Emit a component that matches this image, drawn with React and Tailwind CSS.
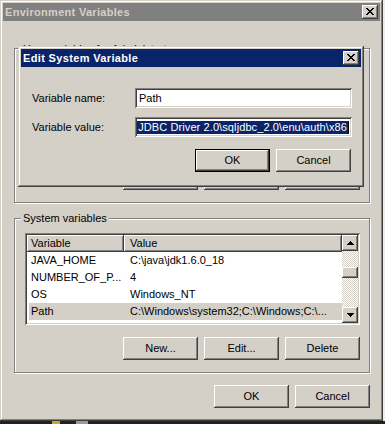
import React from 'react';

// classic 3D edges
const raised = 'shadow-[inset_-1px_-1px_#404040,inset_1px_1px_#ffffff,inset_-2px_-2px_#808080,inset_2px_2px_#d4d0c8]';
const sunken = 'shadow-[inset_1px_1px_#808080,inset_-1px_-1px_#ffffff,inset_2px_2px_#404040,inset_-2px_-2px_#d4d0c8]';
const frame = 'shadow-[inset_-1px_-1px_#404040,inset_1px_1px_#d4d0c8,inset_-2px_-2px_#808080,inset_2px_2px_#ffffff]';

function CloseButton() {
    return (
        <div className={`w-[16px] h-[14px] bg-[#d4d0c8] flex items-center justify-center ${raised}`}>
            <svg width="8" height="7" viewBox="0 0 8 7" shapeRendering="crispEdges" className="-mt-[1px] -ml-[1px]">
                <path fill="#000" d="M0 0h2v1H0z M6 0h2v1H6z M1 1h2v1H1z M5 1h2v1H5z M2 2h4v1H2z M3 3h2v1H3z M2 4h4v1H2z M1 5h2v1H1z M5 5h2v1H5z M0 6h2v1H0z M6 6h2v1H6z" />
            </svg>
        </div>
    );
}

function Button({ children, isDefault }) {
    if (isDefault) {
        return (
            <div className="w-[75px] h-[23px] border border-black">
                <div className={`w-full h-full bg-[#d4d0c8] flex items-center justify-center ${raised}`}>{children}</div>
            </div>
        );
    }
    return (
        <div className={`w-[75px] h-[23px] bg-[#d4d0c8] flex items-center justify-center ${raised}`}>{children}</div>
    );
}

function Arrow({ down }) {
    return (
        <div className={`w-[16px] h-[16px] bg-[#d4d0c8] flex items-center justify-center ${raised}`}>
            <svg width="7" height="4" viewBox="0 0 7 4" shapeRendering="crispEdges" className={down ? 'rotate-180' : ''}>
                <path fill="#000" d="M3 0h1v1H3z M2 1h3v1H2z M1 2h5v1H1z M0 3h7v1H0z" />
            </svg>
        </div>
    );
}

function ListView({ rows, selected, thumbTop, covered }) {
    return (
        <div className={`ml-[10px] mr-[9px] h-[92px] bg-white p-[2px] flex ${sunken}`}>
            <div className="flex-1 flex flex-col overflow-hidden">
                <div className="h-[17px] flex shrink-0">
                    <div className={`w-[97px] bg-[#d4d0c8] pl-[4px] flex items-center ${raised}`}>{covered ? null : 'Variable'}</div>
                    <div className={`flex-1 bg-[#d4d0c8] pl-[6px] flex items-center ${raised}`}>{covered ? null : 'Value'}</div>
                </div>
                {rows.map(([name, value]) => (
                    <div key={name} className={`h-[17px] shrink-0 ml-[2px] flex items-center whitespace-nowrap ${name === selected ? 'bg-[#d4d0c8]' : ''}`}>
                        <div className="w-[95px] pl-[2px] overflow-hidden">{name}</div>
                        <div className="flex-1 pl-[6px] overflow-hidden">{value}</div>
                    </div>
                ))}
            </div>
            <div className="w-[16px] flex flex-col">
                <Arrow />
                <div className="flex-1 bg-[repeating-conic-gradient(#d4d0c8_0_25%,#ffffff_0_50%)] bg-[length:2px_2px]">
                    <div className={`h-[11px] bg-[#d4d0c8] ${raised}`} style={{ marginTop: thumbTop }} />
                </div>
                <Arrow down />
            </div>
        </div>
    );
}

function GroupBox({ label, rows, selected, thumbTop, covered, className = '' }) {
    return (
        <div className={`mr-[10px] ml-[11px] h-[155px] flex flex-col border border-[#808080] shadow-[inset_1px_1px_#ffffff,1px_1px_#ffffff] ${className}`}>
            {covered ? (
                <span className="block -mt-[6px] ml-[6px] w-fit bg-[#d4d0c8] px-[2px] leading-[13px] mb-[7px]">{label}</span>
            ) : (
                <span className="block -mt-[7px] ml-[6px] w-fit bg-[#d4d0c8] px-[2px] leading-[13px] mb-[8px]">{label}</span>
            )}
            <ListView rows={rows} selected={selected} thumbTop={thumbTop} covered={covered} />
            <div className="mt-[12px] mr-[9px] flex justify-end gap-[6px]">
                <Button>{covered ? null : 'New...'}</Button>
                <Button>{covered ? null : 'Edit...'}</Button>
                <Button>{covered ? null : 'Delete'}</Button>
            </div>
        </div>
    );
}

function EditDialog() {
    return (
        <div className={`absolute left-[18px] top-[46px] w-[346px] h-[141px] bg-[#d4d0c8] p-[3px] flex flex-col ${frame}`}>
            <div className="h-[18px] bg-[#0a246a] flex items-center justify-between pl-[2px] pr-[2px]">
                <span className="font-bold text-white tracking-[0.35px]">Edit System Variable</span>
                <CloseButton />
            </div>
            <div className="pl-[11px] pr-[9px] pt-[21px] flex flex-col">
                <div className="flex items-center h-[20px]">
                    <span className="w-[103px]">Variable name:</span>
                    <div className={`flex-1 h-[20px] bg-white p-[2px] pl-[4px] flex items-center ${sunken}`}>Path</div>
                </div>
                <div className="mt-[9px] flex items-center h-[20px]">
                    <span className="w-[103px]">Variable value:</span>
                    <div className={`flex-1 h-[20px] bg-white p-[2px] flex items-center ${sunken}`}>
                        <div className="flex-1 h-[13px] bg-[#0a246a] text-white tracking-[0.1px] flex justify-end items-center overflow-hidden whitespace-nowrap pr-[1px]">
                            {'JDBC Driver 2.0\\sqljdbc_2.0\\enu\\auth\\x86'}
                        </div>
                        <div className="w-[1px] h-[13px] bg-black mr-[1px]" />
                    </div>
                </div>
                <div className="mt-[12px] mr-[1px] flex justify-end gap-[6px]">
                    <Button isDefault>OK</Button>
                    <Button>Cancel</Button>
                </div>
            </div>
        </div>
    );
}

export default function App() {
    const systemRows = [
        ['JAVA_HOME', 'C:\\java\\jdk1.6.0_18'],
        ['NUMBER_OF_P...', '4'],
        ['OS', 'Windows_NT'],
        ['Path', 'C:\\Windows\\system32;C:\\Windows;C:\\...'],
    ];

    return (
        <div className="w-[385px] h-[424px] flex flex-col bg-[#222222] font-['Liberation_Sans',Arial,sans-serif] text-[11px] text-black overflow-hidden">
            <div className="flex">
                {/* Environment Variables window */}
                <div className={`relative w-[383px] h-[421px] bg-[#d4d0c8] p-[3px] flex flex-col ${frame}`}>
                    <div className="h-[18px] bg-[#808080] flex items-center justify-between pl-[2px] pr-[2px]">
                        <span className="font-bold text-[#d4d0c8] tracking-[0.3px]">Environment Variables</span>
                        <CloseButton />
                    </div>
                    <GroupBox label="User variables for Administrator" rows={[]} thumbTop={0} covered className="mt-[27px]" />
                    <GroupBox label="System variables" rows={systemRows} selected="Path" thumbTop={16} className="mt-[15px]" />
                    <div className="mt-[12px] mr-[10px] flex justify-end gap-[6px]">
                        <Button>OK</Button>
                        <Button>Cancel</Button>
                    </div>
                    <EditDialog />
                </div>
                <div className="flex-1 bg-[#ececec]" />
            </div>
            <div className="flex-1 flex">
                <div className="ml-[52px] w-[8px] bg-[#c8a830]" />
                <div className="ml-[16px] w-[12px] bg-[#9a9a9a]" />
            </div>
        </div>
    );
}
